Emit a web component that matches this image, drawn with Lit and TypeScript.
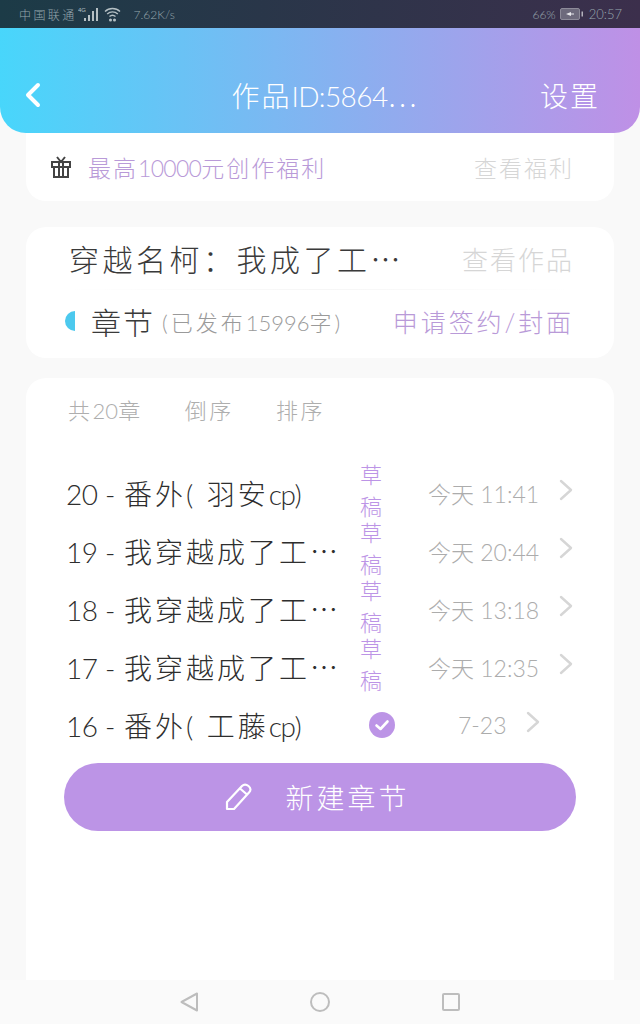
import { LitElement, css, html } from 'lit';
import { customElement } from 'lit/decorators.js';

const chapters = [
  { num: '20 -', name: html`番外( 羽安<span class="tight">cp)</span>`, time: '今天 11:41', done: false },
  { num: '19 -', name: '我穿越成了工⋯', time: '今天 20:44', done: false },
  { num: '18 -', name: '我穿越成了工⋯', time: '今天 13:18', done: false },
  { num: '17 -', name: '我穿越成了工⋯', time: '今天 12:35', done: false },
  { num: '16 -', name: html`番外( 工藤<span class="tight">cp)</span>`, time: '7-23', done: true },
];

const chevron = html`<svg class="chevron" width="16" height="22" viewBox="0 0 16 22" fill="none" stroke="#d6d6d6" stroke-width="2.4" stroke-linecap="round" stroke-linejoin="round"><path d="M3 2l10 9-10 9"/></svg>`;

@customElement('app-root')
export class AppRoot extends LitElement {
  static styles = css`
    :host {
      display: flex;
      flex-direction: column;
      width: 640px;
      height: 1024px;
      overflow: hidden;
      background: #f9f9f9;
      font-family: Lato, "Noto Sans CJK SC", sans-serif;
      font-weight: 300;
    }
    .tight { letter-spacing: -1.5px; }
    .status {
      flex: none;
      height: 28px;
      box-sizing: border-box;
      padding: 0 18px 0 19px;
      display: flex;
      align-items: center;
      gap: 4px;
      background: linear-gradient(90deg, #1c3b47, #3c2f4c);
      color: #97a6ad;
      font-size: 12px;
    }
    .carrier { letter-spacing: 2.4px; margin-right: -3px; }
    .speed { margin-left: 9px; }
    .spacer { flex: 1; }
    .clock { font-size: 13px; margin-left: 1px; }
    .header {
      flex: none;
      position: relative;
      z-index: 1;
      height: 105px;
      box-sizing: border-box;
      padding: 29px 40px 0 24px;
      display: grid;
      grid-template-columns: 1fr auto 1fr;
      align-items: center;
      color: #fff;
      font-size: 28px;
      background: linear-gradient(90deg, #48d6fb, #bf90e6);
      border-radius: 0 0 26px 26px;
    }
    .title { letter-spacing: 2px; margin-left: 26px; white-space: nowrap; }
    .title .tight { letter-spacing: -.6px; }
    .settings { letter-spacing: 2px; justify-self: end; }
    main {
      flex: 1;
      min-height: 0;
      padding: 0 26px;
      display: flex;
      flex-direction: column;
    }
    .card { background: #fff; border-radius: 20px; }
    .perks {
      height: 68px;
      box-sizing: border-box;
      padding: 0 40px 0 25px;
      border-radius: 0 0 20px 20px;
      display: flex;
      align-items: center;
      font-size: 23px;
      letter-spacing: 2px;
    }
    .perks svg { margin-right: 17px; }
    .perks .tight { letter-spacing: -.7px; }
    .purple { color: #b99ad8; }
    .faint { color: #d6d6d6; }
    .work {
      margin-top: 26px;
      height: 131px;
      box-sizing: border-box;
      padding: 0 40px 0 39px;
      display: flex;
      flex-direction: column;
    }
    .work-line {
      height: 62px;
      flex: none;
      display: flex;
      align-items: center;
      justify-content: space-between;
    }
    .work-name { font-size: 30px; letter-spacing: 3.5px; color: #3a3a3a; margin-left: 4px; }
    .view-work { font-size: 26px; letter-spacing: 2px; }
    .divider {
      height: 1px;
      flex: none;
      background: linear-gradient(90deg, #fff, #f6f6f6, #fff);
    }
    .chapter-head { display: flex; align-items: center; }
    .dot {
      width: 10px;
      height: 20px;
      background: #4cc9ee;
      border-radius: 10px 0 0 10px;
      margin-right: 16px;
    }
    .chapter-label { font-size: 30px; letter-spacing: 2px; color: #3a3a3a; }
    .chapter-count { font-size: 22px; color: #9a9a9a; margin-left: 7px; letter-spacing: 3px; }
    .chapter-count .tight { letter-spacing: 0; }
    .apply { font-size: 25px; letter-spacing: 2.9px; }
    .list {
      margin-top: 20px;
      flex: 1;
      min-height: 0;
      padding: 0 38px;
      display: flex;
      flex-direction: column;
      border-radius: 20px 20px 0 0;
    }
    .tools {
      height: 62px;
      flex: none;
      display: flex;
      align-items: center;
      gap: 42px;
      padding: 0 4px;
      font-size: 22px;
      letter-spacing: 2.6px;
      color: #aeaeae;
    }
    .tools .tight { letter-spacing: 0; }
    .rows { margin-top: 24px; }
    .row {
      height: 58px;
      display: flex;
      align-items: center;
      padding-left: 2px;
    }
    .name { width: 294px; flex: none; display: flex; align-items: baseline; font-size: 28px; letter-spacing: 3px; color: #2e2e2e; white-space: nowrap; }
    .num { width: 58px; flex: none; letter-spacing: -.4px; }
    .draft {
      width: 22px;
      flex: none;
      margin-top: -5px;
      font-size: 22px;
      line-height: 32px;
      color: #bc94e6;
    }
    .time { width: 130px; flex: none; margin-left: 46px; font-size: 23px; color: #acacac; white-space: nowrap; }
    .row.done .name { width: 303px; }
    .row.done .time { width: 67px; margin-left: 63px; }
    .check { flex: none; }
    .chevron { flex: none; margin-top: -6px; }
    .new {
      margin: 9px 0 0;
      height: 68px;
      box-sizing: border-box;
      padding-right: 5px;
      border-radius: 34px;
      background: #bc94e6;
      color: #fff;
      font-size: 28px;
      letter-spacing: 3px;
      display: flex;
      align-items: center;
      justify-content: center;
      gap: 32px;
    }
    .nav {
      flex: none;
      height: 44px;
      background: #fafafa;
      display: flex;
      align-items: center;
      justify-content: center;
      gap: 112px;
    }
  `;

  render() {
    return html`
      <div class="status">
        <span class="carrier">中国联通</span>
        <svg width="22" height="16" viewBox="0 0 22 16" fill="#b5c0c4">
          <text x="0" y="6" font-size="6" font-family="Liberation Sans">4G</text>
          <rect x="6" y="12" width="2" height="3"/><rect x="10" y="9" width="2" height="6"/><rect x="14" y="5" width="2" height="10"/><rect x="18" y="2" width="2" height="13"/>
        </svg>
        <svg width="17" height="15" viewBox="0 0 17 15" fill="none" stroke="#b5c0c4" stroke-width="1.4">
          <path d="M1 4.500c4-4 11-4 15 0M3.200 7c3-2.800 7.600-2.800 10.600 0M5.500 9.500c1.800-1.600 4.200-1.600 6 0"/><circle cx="6.500" cy="13" r=".8" fill="#b5c0c4"/><circle cx="10.500" cy="13" r=".8" fill="#b5c0c4"/>
        </svg>
        <span class="speed">7.62K/s</span>
        <span class="spacer"></span>
        <span>66%</span>
        <svg width="24" height="12" viewBox="0 0 24 12">
          <rect x=".5" y=".5" width="19" height="11" rx="1.500" fill="#6d6a7c" stroke="#8d8b99"/>
          <path d="M6 6l5-2v1.500h3v1h-3V8z" fill="#e8e8ec"/>
          <rect x="21.500" y="3.500" width="1.500" height="5" fill="#b3b1bc"/>
        </svg>
        <span class="clock">20:57</span>
      </div>

      <header class="header">
        <svg width="18" height="26" viewBox="0 0 18 26" fill="none" stroke="#fff" stroke-width="4" stroke-linecap="round" stroke-linejoin="round"><path d="M14 3L4 13l10 10"/></svg>
        <span class="title">作品<span class="tight">ID:5864</span>⋯</span>
        <span class="settings">设置</span>
      </header>

      <main>
        <section class="card perks">
          <svg width="20" height="22" viewBox="0 0 20 22" fill="none" stroke="#444" stroke-width="2">
            <path d="M1 6h18v5H1zM3 11v10h14V11M8 6v15M12 6v15M6 1l4 5 4-5"/>
          </svg>
          <span class="purple">最高<span class="tight">10000</span>元创作福利</span>
          <span class="spacer"></span>
          <span class="faint">查看福利</span>
        </section>

        <section class="card work">
          <div class="work-line">
            <span class="work-name">穿越名柯：我成了工⋯</span>
            <span class="faint view-work">查看作品</span>
          </div>
          <div class="divider"></div>
          <div class="work-line">
            <div class="chapter-head">
              <span class="dot"></span>
              <span class="chapter-label">章节</span>
              <span class="chapter-count">(已发布<span class="tight">15996</span>字)</span>
            </div>
            <span class="purple apply">申请签约/封面</span>
          </div>
        </section>

        <section class="card list">
          <div class="tools"><span>共<span class="tight">20</span>章</span><span>倒序</span><span>排序</span></div>
          <div class="rows">
            ${chapters.map(c => html`
              <div class="row ${c.done ? 'done' : ''}">
                <span class="name"><span class="num">${c.num}</span><span>${c.name}</span></span>
                ${c.done
                  ? html`<svg class="check" width="26" height="26" viewBox="0 0 26 26"><circle cx="13" cy="13" r="13" fill="#bc94e6"/><path d="M7.500 13.500l4 3.500 7-7.500" fill="none" stroke="#fff" stroke-width="2.600" stroke-linecap="round" stroke-linejoin="round"/></svg>`
                  : html`<span class="draft">草稿</span>`}
                <span class="time">${c.time}</span>
                ${chevron}
              </div>
            `)}
          </div>
          <div class="new">
            <svg width="28" height="28" viewBox="0 0 28 28" fill="none" stroke="#fff" stroke-width="2.200" stroke-linejoin="round">
              <path d="M2 26v-7L17 3c2-2 4-2 6.500 0s2.500 4.500.5 6.500L9 26zM15 5.500l7 6"/>
            </svg>
            <span>新建章节</span>
          </div>
        </section>
      </main>

      <nav class="nav">
        <svg width="18" height="20" viewBox="0 0 18 20" fill="none" stroke="#bdbdbd" stroke-width="2" stroke-linejoin="round"><path d="M17 1.500v17L1.500 10z"/></svg>
        <svg width="20" height="20" viewBox="0 0 20 20" fill="none" stroke="#bdbdbd" stroke-width="2"><circle cx="10" cy="10" r="9"/></svg>
        <svg width="18" height="18" viewBox="0 0 18 18" fill="none" stroke="#bdbdbd" stroke-width="2"><rect x="1" y="1" width="16" height="16" rx="1"/></svg>
      </nav>
    `;
  }
}
